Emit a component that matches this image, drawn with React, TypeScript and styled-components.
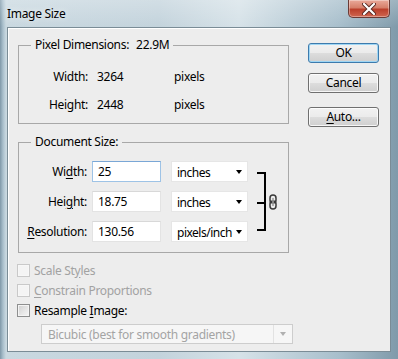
import React from "react";
import styled, { createGlobalStyle } from "styled-components";

const Global = createGlobalStyle`
  html, body { margin: 0; padding: 0; background: #ffffff; }
  body { font-family: "Noto Sans", "Open Sans", sans-serif; font-size: 12px; letter-spacing: -0.3px; color: #000; }
  * { box-sizing: border-box; }
`;

const Frame = styled.div`
  width: 398px;
  height: 359px;
  display: flex;
  flex-direction: column;
  background:
    linear-gradient(180deg, rgba(255,255,255,0.25) 0px, rgba(255,255,255,0) 27px),
    linear-gradient(90deg, #7f98a8 0px, #a9bfcc 3px, #c9d8e0 6px, #c3d3dc 40%, #d6e2e8 60%, #a8bfcc 85%, #7f9aaa 100%);
  padding: 0 7px 7px 7px;
  overflow: hidden;
`;

const TitleBar = styled.div`
  height: 27px;
  display: flex;
  align-items: flex-start;
  justify-content: space-between;
`;

const Title = styled.div`
  padding-top: 5px;
  font-size: 12px;
  color: #000;
  text-shadow: 0 0 6px rgba(255,255,255,0.9);
`;

const CloseButton = styled.div`
  width: 42px;
  height: 18px;
  margin-right: 1px;
  border: 1px solid #6a3a35;
  border-top: none;
  border-radius: 0 0 5px 5px;
  background: linear-gradient(180deg, #eaa99a 0%, #d67f6a 45%, #bb3f2b 55%, #cf6650 100%);
  box-shadow: inset 0 0 0 1px rgba(255,255,255,0.35);
  display: flex;
  align-items: center;
  justify-content: center;
`;

const Body = styled.div`
  flex: 1;
  background: #ededed;
  border: 1px solid #7a8c96;
  box-shadow: inset 1px 1px 0 #ffffff;
  display: flex;
  padding: 9px 0 0 10px;
`;

const LeftCol = styled.div`
  width: 282px;
  display: flex;
  flex-direction: column;
`;

const RightCol = styled.div`
  display: flex;
  flex-direction: column;
  padding: 6px 0 0 8px;
`;

const Group = styled.fieldset<{ $h: number }>`
  margin: 0;
  width: 271px;
  height: ${(p) => p.$h}px;
  border: 1px solid #a8a8a8;
  padding: 0;
`;

const Legend = styled.legend`
  margin-left: 12px;
  padding: 0 4px;
  font-size: 12px;
  line-height: 16px;
  display: flex;
  gap: 7px;
`;

const PixelGrid = styled.div`
  display: grid;
  grid-template-columns: 69px 68px auto;
  column-gap: 9px;
  row-gap: 12px;
  padding-top: 16px;
  line-height: 16px;
`;

const Label = styled.span`
  text-align: right;
  white-space: nowrap;
`;

const Value = styled.span``;

const DocGrid = styled.div`
  display: grid;
  grid-template-columns: 68px 69px 82px auto;
  column-gap: 5px;
  row-gap: 9px;
  padding-top: 11px;
  align-items: center;
`;

const DocLabel = styled.span`
  text-align: right;
  white-space: nowrap;
`;

const Input = styled.div<{ $focus?: boolean }>`
  height: 21px;
  background: #ffffff;
  border: 1px solid ${(p) => (p.$focus ? "#9ec3e6" : "#e3e3e3")};
  border-top-color: ${(p) => (p.$focus ? "#7aa7d6" : "#d8d8d8")};
  padding: 1px 0 0 5px;
  line-height: 17px;
`;

const Select = styled.div`
  margin-left: 5px;
  height: 21px;
  background: #ffffff;
  border: 1px solid #e6e6e6;
  padding: 1px 5px 0 5px;
  line-height: 17px;
  letter-spacing: -0.5px;
  display: flex;
  align-items: center;
  justify-content: space-between;
  white-space: nowrap;
`;

const Arrow = styled.span<{ $color?: string }>`
  flex: none;
  width: 0;
  height: 0;
  border-left: 3.5px solid transparent;
  border-right: 3.5px solid transparent;
  border-top: 4px solid ${(p) => p.$color || "#000"};
`;

const LinkCell = styled.div`
  grid-column: 4;
  grid-row: 1 / span 3;
  align-self: stretch;
  display: flex;
  align-items: center;
  padding-left: 4px;
`;

const Bracket = styled.div`
  width: 9px;
  height: 59px;
  border: 2px solid #000;
  border-left: none;
  position: relative;
  &::after {
    content: "";
    position: absolute;
    left: 0;
    top: 27.5px;
    width: 7px;
    height: 2px;
    background: #000;
  }
`;

const ChainIcon = styled.svg`
  margin-left: 3px;
`;

const Checks = styled.div`
  display: flex;
  flex-direction: column;
  gap: 4px;
  padding-top: 9px;
`;

const CheckRow = styled.div<{ $disabled?: boolean }>`
  display: flex;
  align-items: center;
  height: 16px;
  margin-left: -1px;
  color: ${(p) => (p.$disabled ? "#a2a2a2" : "#000")};
`;

const Box = styled.span<{ $disabled?: boolean }>`
  width: 13px;
  height: 13px;
  margin-right: 4px;
  border: 1px solid ${(p) => (p.$disabled ? "#c9c9c9" : "#8e8f8f")};
  background: ${(p) =>
    p.$disabled
      ? "#f4f4f4"
      : "linear-gradient(135deg, #cfcfcf 0%, #e8e8e8 60%, #f6f6f6 100%)"};
  box-shadow: inset 0 0 0 1px ${(p) => (p.$disabled ? "#f7f7f7" : "#f4f4f4")};
`;

const Underline = styled.u`
  text-decoration: underline;
  text-underline-offset: 2px;
`;

const DisabledSelect = styled.div`
  margin: 6px 0 0 23px;
  width: 252px;
  height: 20px;
  border: 1px solid #cdcdcd;
  background: #f6f6f6;
  color: #a4a4a4;
  display: flex;
  align-items: center;
  padding-left: 6px;
`;

const DisabledText = styled.span`
  flex: 1;
`;

const ArrowBox = styled.span`
  width: 19px;
  height: 100%;
  border-left: 1px solid #e2e2e2;
  display: flex;
  align-items: center;
  justify-content: center;
`;

const Button = styled.div<{ $default?: boolean }>`
  width: 71px;
  height: 20px;
  border: 1px solid ${(p) => (p.$default ? "#3d7bad" : "#707070")};
  border-radius: 3px;
  background: linear-gradient(180deg, #f2f2f2 0%, #ebebeb 50%, #dddddd 51%, #cfcfcf 100%);
  box-shadow: inset 0 0 0 1px ${(p) => (p.$default ? "#9fd6f4" : "rgba(255,255,255,0.8)")};
  display: flex;
  align-items: center;
  justify-content: center;
  font-size: 12px;
  line-height: 16px;
`;

const ButtonStack = styled.div`
  display: flex;
  flex-direction: column;
  gap: 10px;
`;

const AutoButton = styled(Button)`
  margin-top: 4px;
`;

const Spacer = styled.div`
  height: 10px;
`;

export default function App() {
  return (
    <>
      <Global />
      <Frame>
        <TitleBar>
          <Title>Image Size</Title>
          <CloseButton>
            <svg width="14" height="12" viewBox="0 0 14 12">
              <path d="M2 1 L12 11 M12 1 L2 11" stroke="#5a2a24" strokeWidth="4" strokeLinecap="round" />
              <path d="M2 1 L12 11 M12 1 L2 11" stroke="#ffffff" strokeWidth="2.2" strokeLinecap="round" />
            </svg>
          </CloseButton>
        </TitleBar>
        <Body>
          <LeftCol>
            <Group $h={87}>
              <Legend>
                <span>Pixel Dimensions:</span>
                <span>22.9M</span>
              </Legend>
              <PixelGrid>
                <Label>Width:</Label>
                <Value>3264</Value>
                <Value>pixels</Value>
                <Label>Height:</Label>
                <Value>2448</Value>
                <Value>pixels</Value>
              </PixelGrid>
            </Group>
            <Spacer />
            <Group $h={119}>
              <Legend>
                <span>Document Size:</span>
              </Legend>
              <DocGrid>
                <DocLabel>
                  Wi<Underline>d</Underline>th:
                </DocLabel>
                <Input $focus>25</Input>
                <Select>
                  inches <Arrow />
                </Select>
                <LinkCell>
                  <Bracket />
                  <ChainIcon width="8" height="16" viewBox="0 0 8 16">
                    <rect x="1" y="1" width="6" height="8" rx="3" fill="none" stroke="#3a3a3a" strokeWidth="1.5" />
                    <rect x="1" y="7" width="6" height="8" rx="3" fill="none" stroke="#3a3a3a" strokeWidth="1.5" />
                    <line x1="4" y1="4" x2="4" y2="12" stroke="#9a9a9a" strokeWidth="1.5" />
                  </ChainIcon>
                </LinkCell>
                <DocLabel>
                  Hei<Underline>g</Underline>ht:
                </DocLabel>
                <Input>18.75</Input>
                <Select>
                  inches <Arrow />
                </Select>
                <DocLabel>
                  <Underline>R</Underline>esolution:
                </DocLabel>
                <Input>130.56</Input>
                <Select>
                  pixels/inch <Arrow />
                </Select>
              </DocGrid>
            </Group>
            <Checks>
              <CheckRow $disabled>
                <Box $disabled />
                <span>
                  Scale St<Underline>y</Underline>les
                </span>
              </CheckRow>
              <CheckRow $disabled>
                <Box $disabled />
                <span>
                  <Underline>C</Underline>onstrain Proportions
                </span>
              </CheckRow>
              <CheckRow>
                <Box />
                <span>
                  Resample <Underline>I</Underline>mage:
                </span>
              </CheckRow>
            </Checks>
            <DisabledSelect>
              <DisabledText>Bicubic (best for smooth gradients)</DisabledText>
              <ArrowBox>
                <Arrow $color="#b0b0b0" />
              </ArrowBox>
            </DisabledSelect>
          </LeftCol>
          <RightCol>
            <ButtonStack>
              <Button $default>OK</Button>
              <Button>Cancel</Button>
              <AutoButton>
                <span>
                  <Underline>A</Underline>uto...
                </span>
              </AutoButton>
            </ButtonStack>
          </RightCol>
        </Body>
      </Frame>
    </>
  );
}
